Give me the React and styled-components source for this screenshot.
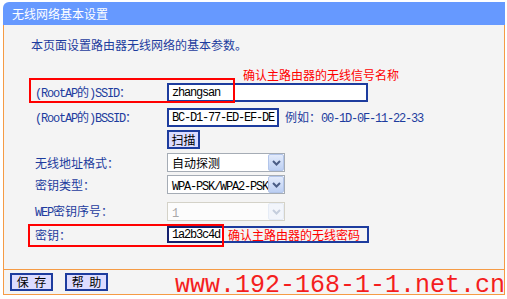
import React from "react";
import styled, { createGlobalStyle, css } from "styled-components";

const BLUE = "#1d3c9e";
const ORANGE = "#f59b45";

const GlobalStyle = createGlobalStyle`
  html, body { margin: 0; padding: 0; background: #fff; }
  body { font-family: "Noto Sans CJK SC", sans-serif; font-size: 12px; }
`;

const Panel = styled.div`
  margin: 2px 0 0 3px;
  width: 502px;
`;

const Header = styled.div`
  height: 23px;
  background: #6699ff;
  border-top-left-radius: 6px;
  color: #fff;
  padding-left: 9px;
  display: flex;
  align-items: center;
  font-size: 12px;
  line-height: 14px;
`;

const Body = styled.div`
  box-sizing: border-box;
  height: 244px;
  background: #f4f4f4;
  border-left: 1px solid ${ORANGE};
  border-right: 1px solid ${ORANGE};
  padding: 13px 0 0 27px;
`;

const Desc = styled.div`
  color: ${BLUE};
  line-height: 14px;
`;

const Form = styled.div`
  padding-left: 4px;
`;

const Row = styled.div`
  position: relative;
  display: flex;
  align-items: center;
  height: ${(p) => p.$h || 19}px;
  margin-top: ${(p) => p.$mt}px;
`;

const Label = styled.div`
  flex: none;
  width: 132px;
  color: ${BLUE};
  line-height: 14px;
  white-space: nowrap;
`;

const Lat = styled.span`
  font-family: "Liberation Mono", monospace;
  font-size: 12px;
  letter-spacing: -1.2px;
`;

const TextBox = styled.div`
  box-sizing: border-box;
  width: ${(p) => p.$w}px;
  height: 19px;
  border: 2px solid ${BLUE};
  background: #fff;
  padding-left: 3px;
  display: flex;
  align-items: center;
  color: #000;
  white-space: nowrap;
  overflow: hidden;
`;

const Hint = styled.div`
  margin-left: 6px;
  color: ${BLUE};
  line-height: 14px;
  white-space: nowrap;
`;

const BlueButton = styled.div`
  box-sizing: border-box;
  width: ${(p) => p.$w}px;
  height: ${(p) => p.$h}px;
  border: 2px solid ${BLUE};
  background: #dcdcff;
  color: #000;
  display: flex;
  align-items: center;
  justify-content: center;
  line-height: 14px;
  white-space: pre;
  word-spacing: ${(p) => p.$ws || 0}px;
`;

const Select = styled.div`
  box-sizing: border-box;
  width: 118px;
  height: 19px;
  border: 1px solid ${(p) => (p.$disabled ? "#d4d2c8" : "#a5acb5")};
  background: ${(p) => (p.$disabled ? "#fcfcfc" : "#fff")};
  display: flex;
  align-items: center;
`;

const SelectText = styled.div`
  flex: 1;
  min-width: 0;
  height: 17px;
  padding-left: 4px;
  color: ${(p) => (p.$disabled ? "#a8a8a8" : "#000")};
  white-space: nowrap;
  overflow: hidden;
  line-height: 17px;
`;

const Arrow = styled.div`
  flex: none;
  box-sizing: border-box;
  width: 16px;
  height: 17px;
  display: flex;
  align-items: center;
  justify-content: center;
  border: 1px solid ${(p) => (p.$disabled ? "#e6ecf6" : "#b2c5ea")};
  border-radius: 2px;
  ${(p) =>
    p.$disabled
      ? css`background: #f2f5fb;`
      : css`background: linear-gradient(#e3ebfb, #bccff3);`}
`;

const KeyBox = styled.div`
  box-sizing: border-box;
  width: 202px;
  height: 17px;
  border: 2px solid ${BLUE};
  display: flex;
  align-items: center;
`;

const KeyInput = styled.div`
  box-sizing: border-box;
  width: 57px;
  height: 17px;
  margin: -2px 0 -2px -2px;
  border: 2px solid #14206e;
  background: #fff;
  color: #000;
  display: flex;
  align-items: center;
  padding-left: 3px;
`;

const RedText = styled.div`
  color: #ff0000;
  line-height: 14px;
  white-space: nowrap;
  margin-left: ${(p) => p.$ml || 0}px;
`;

const Note = styled(RedText)`
  position: absolute;
  left: ${(p) => p.$x}px;
  top: ${(p) => p.$y}px;
`;

const RedBox = styled.div`
  position: absolute;
  box-sizing: border-box;
  left: ${(p) => p.$x}px;
  top: ${(p) => p.$y}px;
  width: ${(p) => p.$w}px;
  height: ${(p) => p.$h}px;
  border: 2px solid #ff0000;
  pointer-events: none;
`;

const Footer = styled.div`
  position: relative;
  box-sizing: border-box;
  height: 26px;
  background: #f4f4f4;
  border: 1px solid ${ORANGE};
  padding: 3px 0 0 6px;
  display: flex;
  align-items: flex-start;
  gap: 12px;
`;

const Watermark = styled.div`
  position: absolute;
  left: 171px;
  top: 3px;
  font-family: "Liberation Mono", monospace;
  font-size: 25px;
  line-height: 25px;
  color: #f41e1e;
  white-space: nowrap;
`;

const Chevron = ({ disabled }) => (
  <svg width="9" height="6" viewBox="0 0 9 6">
    <path
      d="M1 1 L4.5 4.5 L8 1"
      fill="none"
      stroke={disabled ? "#c5cedd" : "#4b5d86"}
      strokeWidth="2"
    />
  </svg>
);

const Dropdown = ({ children, disabled }) => (
  <Select $disabled={disabled}>
    <SelectText $disabled={disabled}>{children}</SelectText>
    <Arrow $disabled={disabled}>
      <Chevron disabled={disabled} />
    </Arrow>
  </Select>
);

export default function App() {
  return (
    <>
      <GlobalStyle />
      <Panel>
        <Header>无线网络基本设置</Header>
        <Body>
          <Desc>本页面设置路由器无线网络的基本参数。</Desc>
          <Form>
            <Row $mt={31}>
              <RedBox $x={-6} $y={-5} $w={206} $h={25} />
              <Note $x={208} $y={-15}>确认主路由器的无线信号名称</Note>
              <Label>
                <Lat>(RootAP</Lat>的<Lat>)SSID</Lat>：
              </Label>
              <TextBox $w={201}>
                <Lat>zhangsan</Lat>
              </TextBox>
            </Row>
            <Row $mt={6}>
              <Label>
                <Lat>(RootAP</Lat>的<Lat>)BSSID</Lat>：
              </Label>
              <TextBox $w={112}>
                <Lat>BC-D1-77-ED-EF-DE</Lat>
              </TextBox>
              <Hint>
                例如：<Lat>00-1D-0F-11-22-33</Lat>
              </Hint>
            </Row>
            <Row $mt={3}>
              <Label />
              <BlueButton $w={33} $h={19}>扫描</BlueButton>
            </Row>
            <Row $mt={4}>
              <Label>无线地址格式：</Label>
              <Dropdown>自动探测</Dropdown>
            </Row>
            <Row $mt={3}>
              <Label>密钥类型：</Label>
              <Dropdown>
                <Lat>WPA-PSK/WPA2-PSK</Lat>
              </Dropdown>
            </Row>
            <Row $mt={8}>
              <Label>
                <Lat>WEP</Lat>密钥序号：
              </Label>
              <Dropdown disabled>
                <Lat>1</Lat>
              </Dropdown>
            </Row>
            <Row $mt={5} $h={17}>
              <RedBox $x={-7} $y={-2} $w={196} $h={23} />
              <Label>密钥：</Label>
              <KeyBox>
                <KeyInput>
                  <Lat>1a2b3c4d</Lat>
                </KeyInput>
                <RedText $ml={4}>确认主路由器的无线密码</RedText>
              </KeyBox>
            </Row>
          </Form>
        </Body>
        <Footer>
          <BlueButton $w={43} $h={18} $ws={3}>保 存</BlueButton>
          <BlueButton $w={43} $h={18} $ws={3}>帮 助</BlueButton>
          <Watermark>www.192-168-1-1.net.cn</Watermark>
        </Footer>
      </Panel>
    </>
  );
}
